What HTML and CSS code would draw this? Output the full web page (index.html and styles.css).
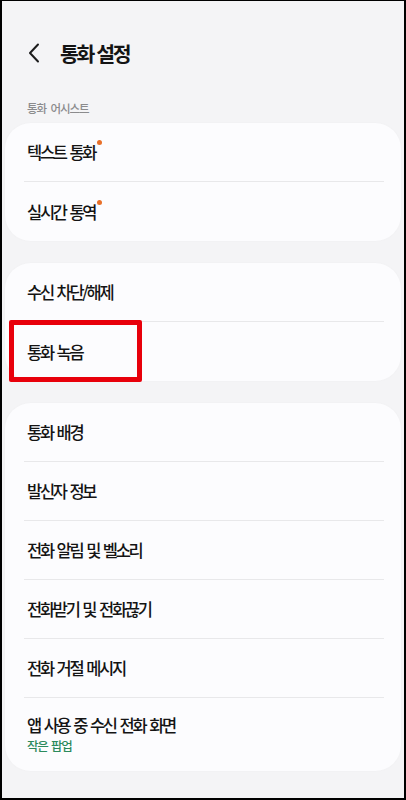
FILE: index.html
```html
<!DOCTYPE html>
<html lang="ko">
<head>
<meta charset="utf-8">
<link rel="stylesheet" href="styles.css">
</head>
<body>
<div class="screen">
  <header class="topbar">
    <svg class="back" width="12" height="20" viewBox="0 0 12 20"><path d="M10 1.5 L2 10 L10 18.5" fill="none" stroke="#1c1c1c" stroke-width="2" stroke-linecap="round" stroke-linejoin="round"/></svg>
    <h1 class="title">통화 설정</h1>
  </header>
  <div class="section-label">통화 어시스트</div>
  <div class="card">
    <div class="row"><span class="label">텍스트 통화<i class="dot"></i></span></div>
    <div class="row"><span class="label">실시간 통역<i class="dot"></i></span></div>
  </div>
  <div class="card">
    <div class="row"><span class="label">수신 차단/해제</span></div>
    <div class="row"><span class="label">통화 녹음</span><div class="highlight"></div></div>
  </div>
  <div class="card last">
    <div class="row"><span class="label">통화 배경</span></div>
    <div class="row"><span class="label">발신자 정보</span></div>
    <div class="row"><span class="label">전화 알림 및 벨소리</span></div>
    <div class="row"><span class="label">전화받기 및 전화끊기</span></div>
    <div class="row"><span class="label">전화 거절 메시지</span></div>
    <div class="row two-line">
      <span class="label">앱 사용 중 수신 전화 화면</span>
      <span class="sub">작은 팝업</span>
    </div>
  </div>
</div>
</body>
</html>
```

FILE: styles.css
```css
* { box-sizing: border-box; margin: 0; padding: 0; }
html, body { width: 406px; height: 800px; overflow: hidden; }
body {
  font-family: "Noto Sans CJK KR", "Noto Sans", sans-serif;
  background: #000;
}
.screen {
  width: 406px;
  height: 800px;
  background: #f4f4f6;
  border: 2px solid #000;
  border-top-width: 1px;
  overflow: hidden;
}
.topbar {
  display: flex;
  align-items: center;
  height: 50px;
  margin-top: 27px;
  padding-left: 26px;
}
.back { flex: none; }
.title {
  margin-left: 20px;
  font-size: 20.5px;
  font-weight: 700;
  letter-spacing: -2.4px;
  word-spacing: 0;
  color: #141414;
}
.section-label {
  margin-top: 22px;
  padding-left: 25px;
  font-size: 11.5px;
  font-weight: 500;
  letter-spacing: -1px;
  word-spacing: 2px;
  color: #8b8b8d;
  line-height: 16px;
}
.card {
  margin: 7px 3px 0;
  background: #fcfcfe;
  border-radius: 26px;
  padding: 0 17px 0 19px;
  box-shadow: 0 0 3px rgba(0, 0, 0, 0.025);
}
.card + .card { margin-top: 22px; }
.row {
  position: relative;
  height: 59px;
  display: flex;
  flex-direction: column;
  justify-content: center;
  padding-left: 3px;
  border-bottom: 1px solid #e8e8ea;
}
.row:last-child { border-bottom: none; }
.label {
  position: relative;
  font-size: 16.5px;
  font-weight: 500;
  letter-spacing: -2.3px;
  word-spacing: 1.5px;
  color: #141414;
  line-height: 22px;
  align-self: flex-start;
}
.dot {
  position: absolute;
  right: -7px;
  top: -1px;
  width: 5px;
  height: 5px;
  border-radius: 50%;
  background: #e8702a;
}
.two-line { height: 73px; padding-bottom: 1px; }
.sub {
  margin-top: 1px;
  font-size: 12.5px;
  font-weight: 500;
  letter-spacing: -1.2px;
  word-spacing: 1px;
  color: #2b8a5c;
  line-height: 18px;
}
.highlight {
  position: absolute;
  left: -15px;
  top: -2px;
  width: 133px;
  height: 62px;
  border: 5px solid #e8000b;
  border-radius: 2px;
}
```
